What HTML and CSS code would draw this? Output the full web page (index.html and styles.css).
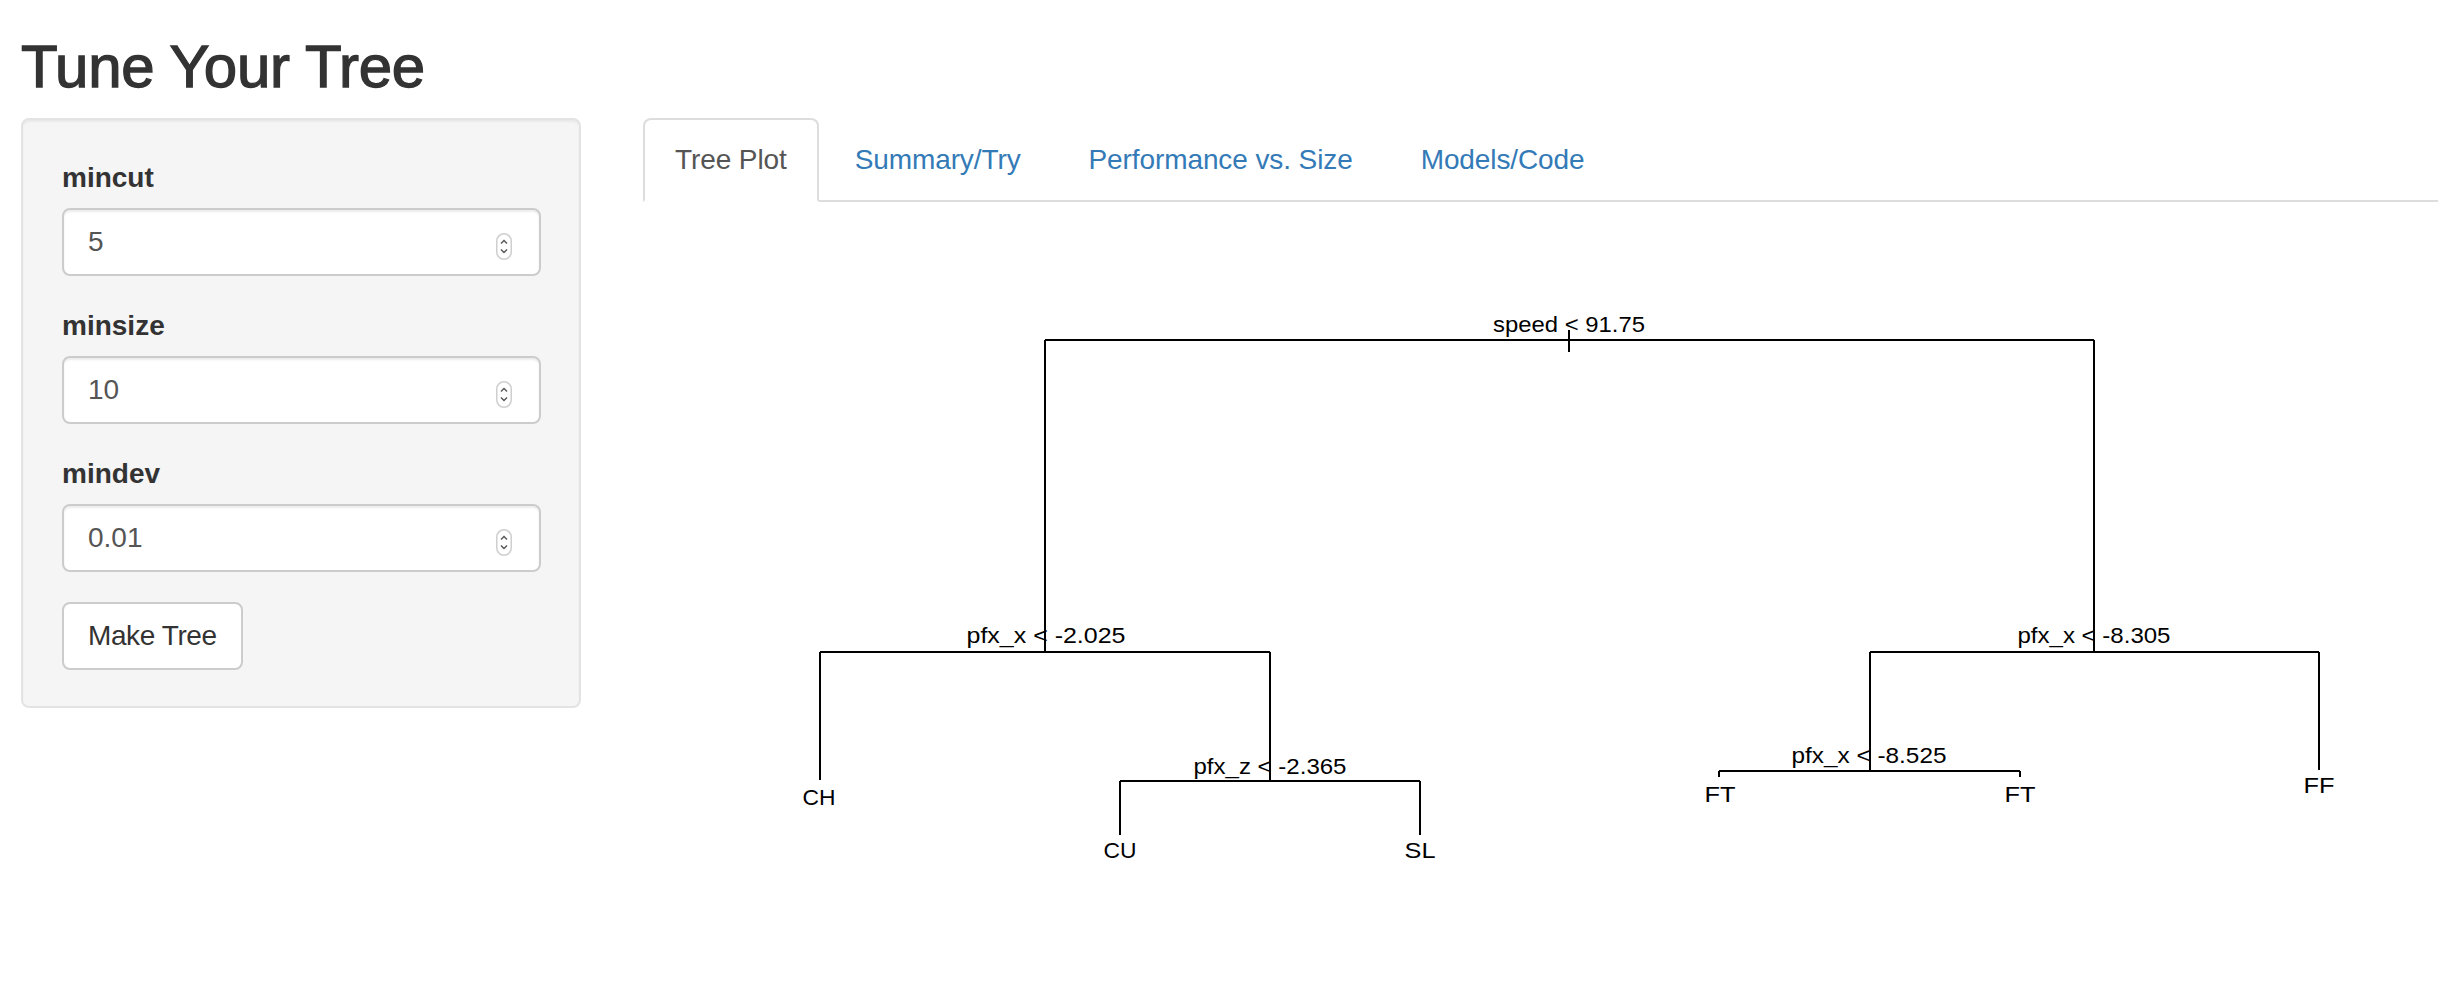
FILE: index.html
```html
<!DOCTYPE html>
<html>
<head>
<meta charset="utf-8">
<title>Tune Your Tree</title>
<link rel="stylesheet" href="styles.css">
</head>
<body>
<div class="container">
  <h2 class="title">Tune Your Tree</h2>
  <div class="row">
    <aside class="sidebar">
      <div class="well">
        <div class="form-group">
          <label class="control-label">mincut</label>
          <div class="num-input"><span class="val">5</span>
            <svg class="spin" width="16" height="27" viewBox="0 0 16 27"><rect x="0.75" y="0.75" width="14.5" height="25.5" rx="7.25" fill="#fff" stroke="#cfcfcf" stroke-width="1.5"/><path d="M5 10.5 L8 7.5 L11 10.5" fill="none" stroke="#555" stroke-width="1.4"/><path d="M5 16.5 L8 19.5 L11 16.5" fill="none" stroke="#555" stroke-width="1.4"/></svg>
          </div>
        </div>
        <div class="form-group">
          <label class="control-label">minsize</label>
          <div class="num-input"><span class="val">10</span>
            <svg class="spin" width="16" height="27" viewBox="0 0 16 27"><rect x="0.75" y="0.75" width="14.5" height="25.5" rx="7.25" fill="#fff" stroke="#cfcfcf" stroke-width="1.5"/><path d="M5 10.5 L8 7.5 L11 10.5" fill="none" stroke="#555" stroke-width="1.4"/><path d="M5 16.5 L8 19.5 L11 16.5" fill="none" stroke="#555" stroke-width="1.4"/></svg>
          </div>
        </div>
        <div class="form-group">
          <label class="control-label">mindev</label>
          <div class="num-input"><span class="val">0.01</span>
            <svg class="spin" width="16" height="27" viewBox="0 0 16 27"><rect x="0.75" y="0.75" width="14.5" height="25.5" rx="7.25" fill="#fff" stroke="#cfcfcf" stroke-width="1.5"/><path d="M5 10.5 L8 7.5 L11 10.5" fill="none" stroke="#555" stroke-width="1.4"/><path d="M5 16.5 L8 19.5 L11 16.5" fill="none" stroke="#555" stroke-width="1.4"/></svg>
          </div>
        </div>
        <button class="btn" type="button">Make Tree</button>
      </div>
    </aside>
    <main class="main">
      <ul class="nav-tabs">
        <li class="active"><a>Tree Plot</a></li>
        <li><a>Summary/Try</a></li>
        <li><a>Performance vs. Size</a></li>
        <li><a>Models/Code</a></li>
      </ul>
      <div class="tab-content">
        <svg class="plot" width="1795" height="800" viewBox="643 202 1795 800" preserveAspectRatio="xMinYMin meet">
          <g class="edges" fill="none" stroke="#000" stroke-width="2">
            <path d="M1045 340 H2094"/>
            <path d="M1569 330 V352"/>
            <path d="M1045 340 V652"/>
            <path d="M820 652 H1270"/>
            <path d="M820 652 V780"/>
            <path d="M1270 652 V781"/>
            <path d="M1120 781 H1420"/>
            <path d="M1120 781 V835"/>
            <path d="M1420 781 V835"/>
            <path d="M2094 340 V652"/>
            <path d="M1870 652 H2319"/>
            <path d="M1870 652 V771"/>
            <path d="M1719 771 H2020"/>
            <path d="M1719 771 V777"/>
            <path d="M2020 771 V777"/>
            <path d="M2319 652 V770"/>
          </g>
          <g class="labels">
            <text x="1569" y="332" textLength="152" lengthAdjust="spacingAndGlyphs">speed &lt; 91.75</text>
            <text x="1046" y="643" textLength="159" lengthAdjust="spacingAndGlyphs">pfx_x &lt; -2.025</text>
            <text x="1270" y="774" textLength="153" lengthAdjust="spacingAndGlyphs">pfx_z &lt; -2.365</text>
            <text x="2094" y="643" textLength="153" lengthAdjust="spacingAndGlyphs">pfx_x &lt; -8.305</text>
            <text x="1869" y="763" textLength="155" lengthAdjust="spacingAndGlyphs">pfx_x &lt; -8.525</text>
            <text x="819" y="805" textLength="33" lengthAdjust="spacingAndGlyphs">CH</text>
            <text x="1120" y="858" textLength="33" lengthAdjust="spacingAndGlyphs">CU</text>
            <text x="1420" y="858" textLength="31" lengthAdjust="spacingAndGlyphs">SL</text>
            <text x="1720" y="802" textLength="31" lengthAdjust="spacingAndGlyphs">FT</text>
            <text x="2020" y="802" textLength="31" lengthAdjust="spacingAndGlyphs">FT</text>
            <text x="2319" y="793" textLength="31" lengthAdjust="spacingAndGlyphs">FF</text>
          </g>
        </svg>
      </div>
    </main>
  </div>
</div>
</body>
</html>
```

FILE: styles.css
```css
html, body {
  margin: 0;
  padding: 0;
  background: #fff;
}
body {
  font-family: "Liberation Sans", Arial, Helvetica, sans-serif;
  font-size: 28px;
  line-height: 40px;
  color: #333;
}
.container {
  padding: 0 18px 0 21px;
}
.title {
  margin: 34px 0 18px 0;
  font-size: 60px;
  line-height: 66px;
  font-weight: 500;
  color: #333;
  letter-spacing: -0.3px;
  -webkit-text-stroke: 1.3px #333;
}
.row {
  display: flex;
  align-items: flex-start;
  gap: 62px;
}
.sidebar {
  width: 560px;
  flex: none;
}
.well {
  background: #f5f5f5;
  border: 2px solid #e3e3e3;
  border-radius: 8px;
  padding: 38px 38px 36px 39px;
  box-shadow: inset 0 2px 2px rgba(0, 0, 0, 0.05);
}
.form-group {
  margin-bottom: 30px;
}
.control-label {
  display: block;
  font-weight: bold;
  font-size: 28px;
  line-height: 40px;
  margin-bottom: 10px;
  color: #333;
}
.num-input {
  height: 68px;
  box-sizing: border-box;
  border: 2px solid #ccc;
  border-radius: 8px;
  background: #fff;
  padding: 0 27px 0 24px;
  display: flex;
  align-items: center;
  justify-content: space-between;
  font-size: 28px;
  color: #555;
  box-shadow: inset 0 2px 2px rgba(0, 0, 0, 0.075);
}
.num-input .val {
  line-height: 40px;
}
.spin {
  display: block;
  margin-top: 8px;
}
.btn {
  display: block;
  width: 181px;
  height: 68px;
  box-sizing: border-box;
  border: 2px solid #ccc;
  border-radius: 8px;
  background: #fff;
  color: #333;
  font-family: "Liberation Sans", Arial, Helvetica, sans-serif;
  font-size: 28px;
  line-height: 40px;
  padding: 0 0 0 24px;
  text-align: left;
  letter-spacing: -0.4px;
}
.main {
  flex: 1;
  min-width: 0;
}
.nav-tabs {
  list-style: none;
  margin: 0;
  padding: 0;
  display: flex;
  border-bottom: 2px solid #ddd;
}
.nav-tabs li {
  margin-bottom: -2px;
}
.nav-tabs a {
  display: block;
  padding: 20px 30px;
  margin-right: 4px;
  border: 2px solid transparent;
  border-radius: 8px 8px 0 0;
  color: #337ab7;
  font-size: 28px;
  line-height: 40px;
  letter-spacing: -0.1px;
  cursor: pointer;
}
.nav-tabs li.active a {
  color: #555;
  background: #fff;
  border-color: #ddd #ddd transparent #ddd;
}
.tab-content {
  display: block;
}
.plot {
  display: block;
}
.labels text {
  font-family: "Liberation Sans", Arial, Helvetica, sans-serif;
  font-size: 22px;
  fill: #000;
  text-anchor: middle;
}
```
